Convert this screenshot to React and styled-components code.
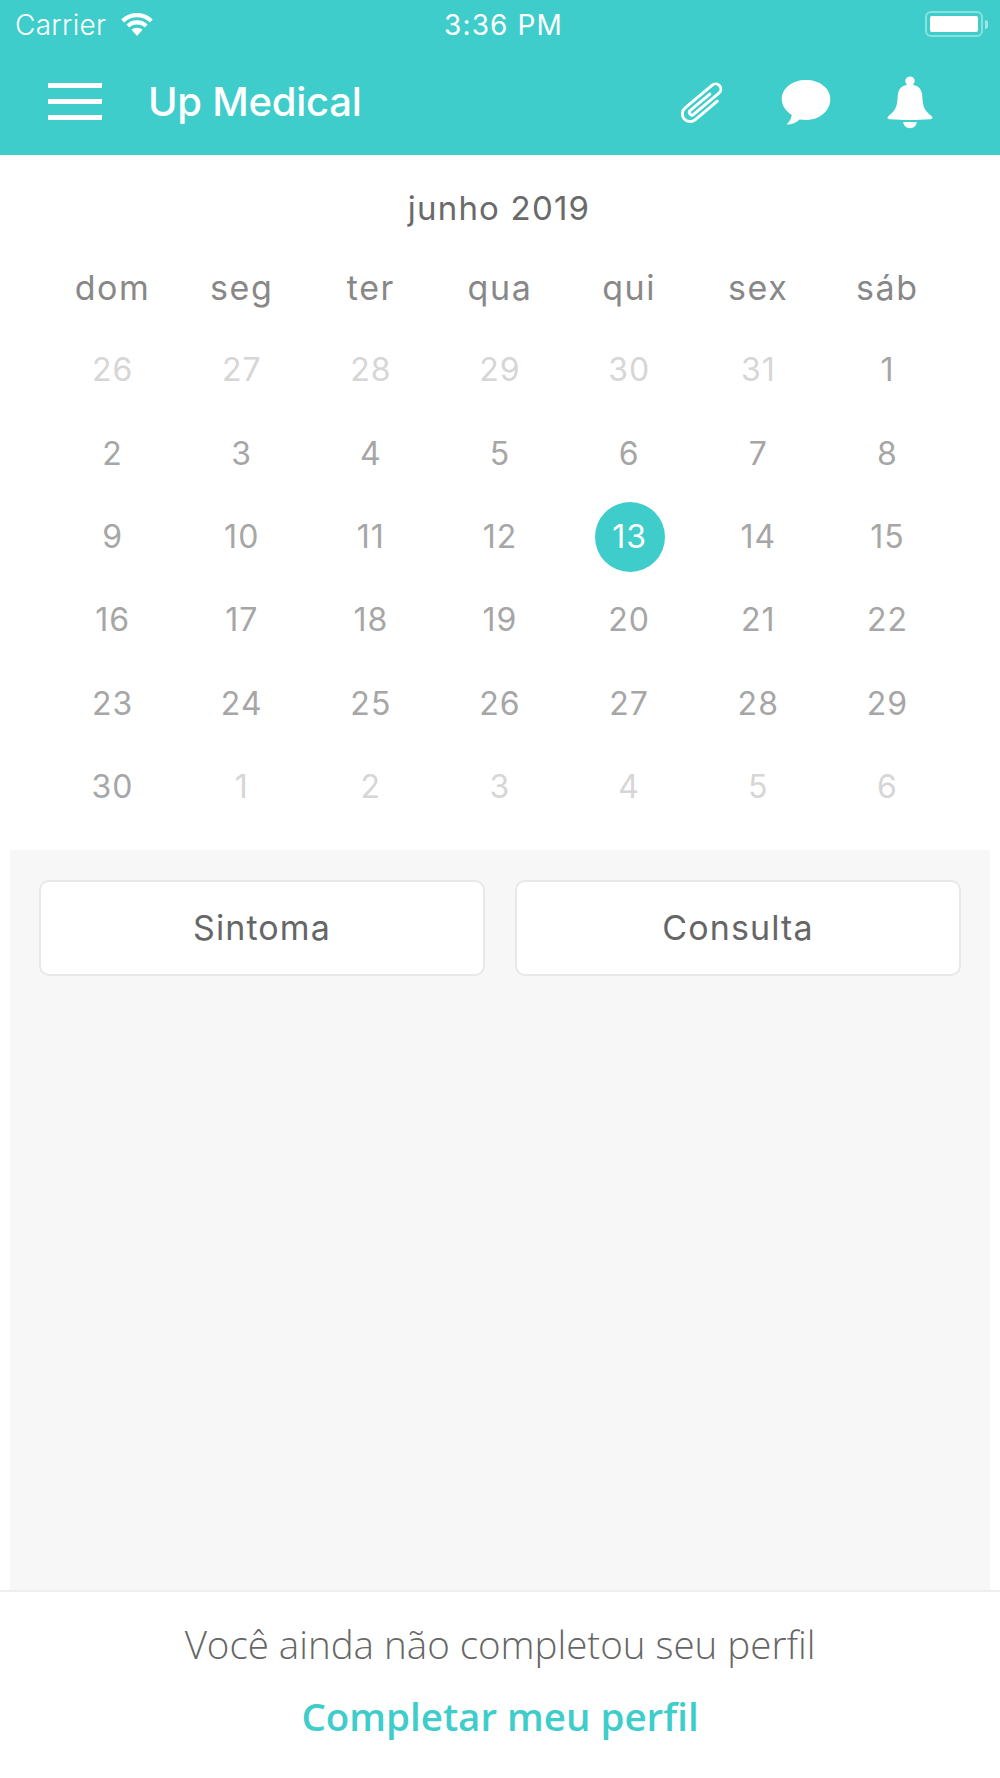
import React from "react"
import styled, { createGlobalStyle } from "styled-components"

const teal = "#3ecdca"

const GlobalStyle = createGlobalStyle`
  html, body {
    margin: 0;
    padding: 0;
    background: #fff;
  }
`

const weekdays = ["dom", "seg", "ter", "qua", "qui", "sex", "sáb"]

const days = [
  [[26, 1], [27, 1], [28, 1], [29, 1], [30, 1], [31, 1], [1]],
  [[2], [3], [4], [5], [6], [7], [8]],
  [[9], [10], [11], [12], [13], [14], [15]],
  [[16], [17], [18], [19], [20], [21], [22]],
  [[23], [24], [25], [26], [27], [28], [29]],
  [[30], [1, 1], [2, 1], [3, 1], [4, 1], [5, 1], [6, 1]],
]

export default function App() {
  return (
    <Page>
      <GlobalStyle />
      <Header>
        <StatusBar>
          <Carrier>
            Carrier
            <svg width="34" height="24" viewBox="0 0 36 26" fill="#fff">
              <path d="M18 1C11 1 5.500 3.600 1 8l3 3.400C8 7.700 12.700 5.700 18 5.700s10 2 14 5.700L35 8C30.500 3.600 25 1 18 1z" />
              <path d="M18 9c-4.700 0-8.500 1.700-11.500 4.500l3 3.300C11.700 14.800 14.600 13.600 18 13.600s6.300 1.200 8.500 3.200l3-3.300C26.500 10.700 22.700 9 18 9z" />
              <path d="M18 17c-2.500 0-4.500.9-6 2.300L18 26l6-6.700C22.500 17.900 20.500 17 18 17z" />
            </svg>
          </Carrier>
          <Clock>3:36 PM</Clock>
          <Battery>
            <BatteryBody>
              <BatteryFill />
            </BatteryBody>
            <BatteryCap />
          </Battery>
        </StatusBar>
        <NavBar>
          <NavLeft>
            <Burger>
              <span />
              <span />
              <span />
            </Burger>
            <Title>Up Medical</Title>
          </NavLeft>
          <NavIcons>
            <svg width="46" height="42" viewBox="0 0 46 42" fill="none" stroke="#fff" strokeWidth="2.500" strokeLinecap="round">
              <path
                transform="translate(23 21) rotate(-40) scale(1.16) translate(-22.500 0)"
                d="M33 6.700H8a6.700 6.700 0 0 1 0-13.400H38.500a4.500 4.500 0 0 1 0 9H10a2.200 2.200 0 0 1 0-4.400H32"
              />
            </svg>
            <svg width="50" height="48" viewBox="0 0 50 48" fill="#fff">
              <path d="M25 1C11.500 1 .8 9 .8 20c0 6.700 4 12.300 10 15.900-.5 3.500-2.500 7-5.300 9.700 4.500.2 9.700-1.500 13-5 2 .3 4.300.5 6.500.5 13.500 0 24.300-9 24.300-21C49.300 9 38.500 1 25 1z" />
            </svg>
            <svg width="48" height="54" viewBox="0 0 46 54" preserveAspectRatio="none" fill="#fff">
              <circle cx="23" cy="5" r="4.500" />
              <path d="M23 8.500c-8 0-11.500 5-11.800 11.500-.4 8-.6 13.300-8.200 19.500-2.500 2-2 3.500 1 3.800 12 1 26 1 38 0 3-.3 3.500-1.800 1-3.800-7.600-6.200-7.800-11.500-8.200-19.500C34.500 13.500 31 8.500 23 8.500z" />
              <path d="M16.500 46h13c-.5 4-3 6.200-6.500 6.200S17 50 16.500 46z" />
            </svg>
          </NavIcons>
        </NavBar>
      </Header>

      <Calendar>
        <Month>junho 2019</Month>
        <Grid>
          {weekdays.map((d) => (
            <Weekday key={d}>{d}</Weekday>
          ))}
          {days.flat().map(([n, muted], i) => (
            <Day key={i} $muted={muted}>
              {n === 13 ? <Today>{n}</Today> : n}
            </Day>
          ))}
        </Grid>
      </Calendar>

      <Panel>
        <Actions>
          <ActionButton>Sintoma</ActionButton>
          <ActionButton>Consulta</ActionButton>
        </Actions>
      </Panel>

      <Footer>
        <FooterText>Você ainda não completou seu perfil</FooterText>
        <FooterLink>Completar meu perfil</FooterLink>
      </Footer>
    </Page>
  )
}

const Page = styled.div`
  width: 1000px;
  height: 1778px;
  display: flex;
  flex-direction: column;
  background: #fff;
  overflow: hidden;
`

const Header = styled.header`
  height: 155px;
  background: ${teal};
  color: #fff;
  flex-shrink: 0;
`

const StatusBar = styled.div`
  height: 50px;
  padding: 0 12px 0 15px;
  display: grid;
  grid-template-columns: 1fr auto 1fr;
  align-items: center;
  font-family: Inter, "Liberation Sans", sans-serif;
  font-size: 28px;
`

const Carrier = styled.div`
  display: flex;
  align-items: center;
  gap: 14px;
  font-weight: 300;
  letter-spacing: 0.3px;
  svg {
    margin-top: -2px;
  }
`

const Clock = styled.div`
  padding-left: 4px;
  font-weight: 400;
  letter-spacing: 1.1px;
`

const Battery = styled.div`
  justify-self: end;
  display: flex;
  align-items: center;
  margin-top: -2px;
`

const BatteryBody = styled.div`
  width: 48px;
  height: 16px;
  padding: 3px;
  border: 2px solid rgba(255, 255, 255, 0.4);
  border-radius: 6px;
`

const BatteryFill = styled.div`
  height: 100%;
  background: #fff;
  border-radius: 2px;
`

const BatteryCap = styled.div`
  width: 3px;
  height: 9px;
  margin-left: 2px;
  background: rgba(255, 255, 255, 0.5);
  border-radius: 0 3px 3px 0;
`

const NavBar = styled.div`
  height: 105px;
  padding: 0 66px 0 48px;
  display: flex;
  align-items: center;
  justify-content: space-between;
`

const NavLeft = styled.div`
  display: flex;
  align-items: center;
  gap: 46px;
  padding-bottom: 3px;
`

const Burger = styled.div`
  width: 54px;
  display: flex;
  flex-direction: column;
  gap: 11px;
  span {
    display: block;
    height: 5px;
    background: #fff;
  }
`

const Title = styled.div`
  font-family: Inter, "Liberation Sans", sans-serif;
  font-size: 40px;
  font-weight: 500;
  letter-spacing: -0.25px;
`

const NavIcons = styled.div`
  display: flex;
  align-items: center;
  gap: 55px;
`

const Calendar = styled.section`
  padding: 0 48px;
  flex-shrink: 0;
  height: 695px;
  font-family: Inter, "Liberation Sans", sans-serif;
`

const Month = styled.div`
  height: 90px;
  padding-top: 35px;
  box-sizing: border-box;
  text-align: center;
  font-size: 33px;
  color: #6a6a6a;
  line-height: 36px;
  letter-spacing: 1.2px;
  margin-left: -2px;
`

const Grid = styled.div`
  display: grid;
  grid-template-columns: repeat(7, 1fr);
  grid-auto-rows: 83.3px;
`

const Weekday = styled.div`
  display: flex;
  align-items: center;
  justify-content: center;
  padding-top: 2px;
  font-size: 34px;
  letter-spacing: 1.6px;
  color: #888;
`

const Day = styled.div`
  display: flex;
  align-items: center;
  justify-content: center;
  font-size: 32px;
  letter-spacing: 1px;
  color: ${(p) => (p.$muted ? "#d6d6d6" : "#a6a6a6")};
`

const Today = styled.div`
  width: 70px;
  height: 70px;
  margin-left: 1px;
  border-radius: 50%;
  background: ${teal};
  color: #fff;
  display: flex;
  align-items: center;
  justify-content: center;
`

const Panel = styled.section`
  flex: 1;
  margin: 0 10px;
  padding: 30px 29px 0;
  background: #f7f7f7;
`

const Actions = styled.div`
  display: grid;
  grid-template-columns: 1fr 1fr;
  gap: 30px;
`

const ActionButton = styled.div`
  height: 96px;
  box-sizing: border-box;
  padding-bottom: 2px;
  background: #fff;
  border: 2.500px solid #e8e8e8;
  border-radius: 10px;
  display: flex;
  align-items: center;
  justify-content: center;
  font-family: Inter, "Liberation Sans", sans-serif;
  font-size: 34px;
  letter-spacing: 1.100px;
  color: #666;
`

const Footer = styled.footer`
  height: 188px;
  flex-shrink: 0;
  box-sizing: border-box;
  border-top: 2px solid #eee;
  background: #fff;
  text-align: center;
  font-family: "Open Sans", "Liberation Sans", sans-serif;
`

const FooterText = styled.div`
  margin-top: 26px;
  font-size: 38.500px;
  font-weight: 300;
  line-height: 52px;
  color: #666;
`

const FooterLink = styled.div`
  margin-top: 20px;
  font-size: 38.500px;
  font-weight: 600;
  line-height: 52px;
  color: ${teal};
`
